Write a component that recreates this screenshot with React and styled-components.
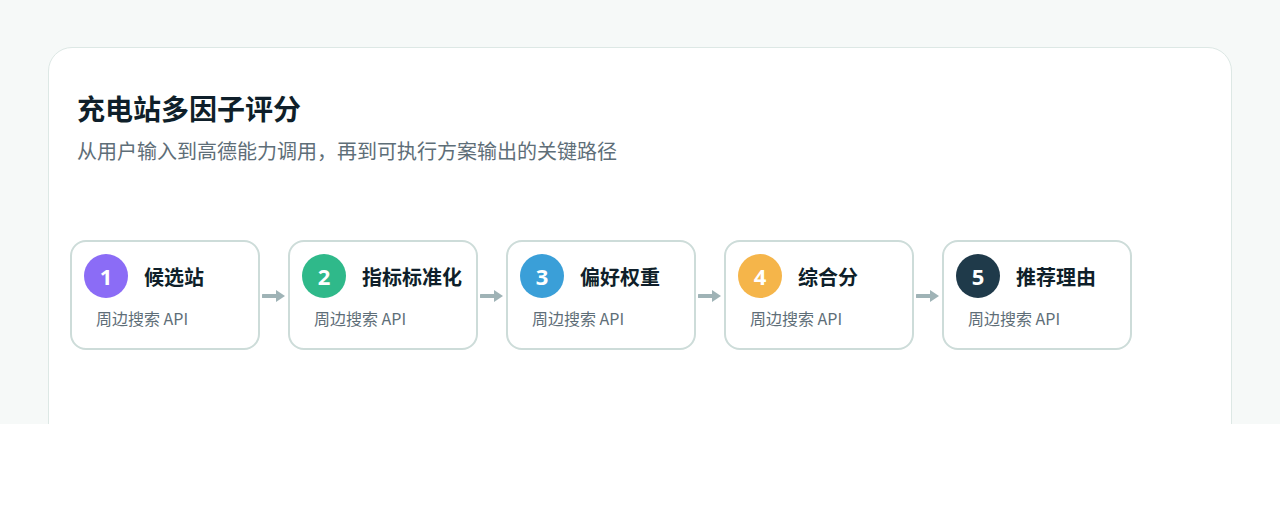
import React from "react";
import styled, { createGlobalStyle } from "styled-components";

const Global = createGlobalStyle`
  body { margin: 0; background: #fff; font-family: "Noto Sans CJK SC", "Noto Sans", sans-serif; }
`;
const Page = styled.div`
  height: 424px; overflow: hidden; background: #f6f9f8;
  padding: 47px 48px 0; box-sizing: border-box;
`;
const Card = styled.div`
  background: #fff; border: 1px solid #dde8e5; border-radius: 24px;
  padding: 40px 28px 120px; min-height: 500px; box-sizing: border-box;
`;
const Title = styled.h1`
  margin: 0; font-size: 28px; font-weight: 700; color: #0f1f2a; line-height: 40px;
`;
const Sub = styled.p`
  margin: 8px 0 0; font-size: 20px; color: #5e6e78; line-height: 30px;
`;
const Flow = styled.div`
  display: flex; align-items: center; margin: 74px 0 0 -7px;
`;
const Step = styled.div`
  width: 190px; height: 110px; box-sizing: border-box; border: 2px solid #cddcd9;
  border-radius: 16px; padding: 12px 12px 0; display: flex; flex-direction: column;
`;
const Head = styled.div`display: flex; align-items: center; gap: 16px;`;
const Num = styled.div`
  width: 44px; height: 44px; border-radius: 50%; background: ${p => p.$c};
  color: #fff; font-weight: 700; font-size: 22px; display: flex; align-items: center; justify-content: center;
  font-family: "Noto Sans", sans-serif;
`;
const Name = styled.div`font-size: 20px; font-weight: 700; color: #0f1f2a;`;
const Desc = styled.div`font-size: 16px; color: #5e6e78; margin: 8px 0 0 12px;`;
const Arrow = styled.div`width: 28px; display: flex; justify-content: center; padding-top: 2px;`;

const steps = [
  ["候选站", "#8b6cf6"], ["指标标准化", "#2fb98a"], ["偏好权重", "#3a9fd8"],
  ["综合分", "#f5b54a"], ["推荐理由", "#1f3a4a"],
];

export default function App() {
  return (
    <>
      <Global />
      <Page>
        <Card>
          <Title>充电站多因子评分</Title>
          <Sub>从用户输入到高德能力调用，再到可执行方案输出的关键路径</Sub>
          <Flow>
            {steps.map(([n, c], i) => (
              <React.Fragment key={n}>
                {i > 0 && (
                  <Arrow>
                    <svg width="24" height="14" viewBox="0 0 24 14">
                      <path d="M1 7H15" stroke="#9fb3b6" strokeWidth="4" strokeLinecap="round" />
                      <path d="M14 1L23 7L14 13Z" fill="#9fb3b6" />
                    </svg>
                  </Arrow>
                )}
                <Step>
                  <Head><Num $c={c}>{i + 1}</Num><Name>{n}</Name></Head>
                  <Desc>周边搜索 API</Desc>
                </Step>
              </React.Fragment>
            ))}
          </Flow>
        </Card>
      </Page>
    </>
  );
}
